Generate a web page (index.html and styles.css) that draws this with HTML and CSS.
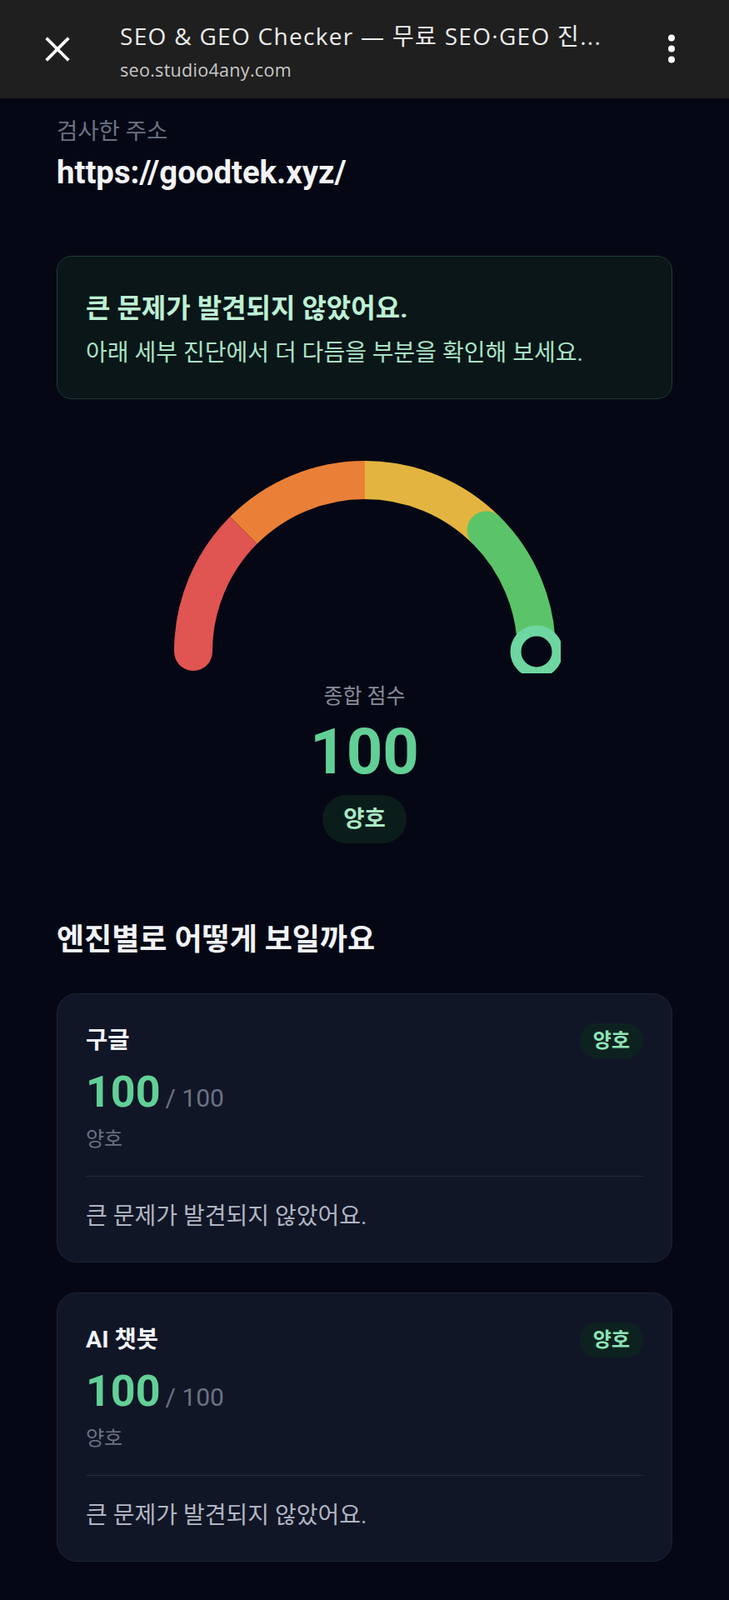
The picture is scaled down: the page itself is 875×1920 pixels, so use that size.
FILE: index.html
```html
<!DOCTYPE html>
<html lang="ko">
<head>
<meta charset="utf-8">
<title>SEO &amp; GEO Checker</title>
<link rel="stylesheet" href="styles.css">
</head>
<body>
<header class="topbar">
  <div class="close-btn">
    <svg width="30" height="30" viewBox="0 0 30 30"><path d="M3 3 L27 27 M27 3 L3 27" stroke="#ffffff" stroke-width="3.8" stroke-linecap="square" fill="none"/></svg>
  </div>
  <div class="tab-info">
    <div class="tab-title">SEO &amp; GEO Checker — 무료 SEO·GEO 진...</div>
    <div class="tab-url">seo.studio4any.com</div>
  </div>
  <div class="menu-btn">
    <svg width="10" height="36" viewBox="0 0 10 36"><circle cx="5" cy="4.5" r="4" fill="#ffffff"/><circle cx="5" cy="17.5" r="4" fill="#ffffff"/><circle cx="5" cy="30.5" r="4" fill="#ffffff"/></svg>
  </div>
</header>

<main class="main">
  <div class="label">검사한 주소</div>
  <div class="url">https://goodtek.xyz/</div>

  <section class="alert">
    <div class="alert-title">큰 문제가 발견되지 않았어요.</div>
    <div class="alert-text">아래 세부 진단에서 더 다듬을 부분을 확인해 보세요.</div>
  </section>

  <section class="gauge">
    <svg class="gauge-svg" width="470" height="260" viewBox="0 0 470 260">
      <circle cx="29" cy="234" r="23" fill="#e05452"/>
      <path d="M29 234 A206 206 0 0 1 89.34 88.34" stroke="#e05452" stroke-width="46" fill="none"/>
      <path d="M89.34 88.34 A206 206 0 0 1 235 28" stroke="#ea8038" stroke-width="46" fill="none"/>
      <path d="M235 28 A206 206 0 0 1 380.66 88.34" stroke="#e4b440" stroke-width="46" fill="none"/>
      <path d="M380.66 88.34 A206 206 0 0 1 441 234" stroke="#5cc468" stroke-width="46" stroke-linecap="round" fill="none"/>
      <circle cx="441" cy="234" r="25" fill="#050814" stroke="#6dd6a1" stroke-width="13"/>
    </svg>
    <div class="gauge-label">종합 점수</div>
    <div class="gauge-score">100</div>
    <div class="badge">양호</div>
  </section>

  <h2 class="section-title">엔진별로 어떻게 보일까요</h2>

  <div class="cards">
    <article class="card">
      <div class="card-head">
        <div class="card-name">구글</div>
        <div class="pill">양호</div>
      </div>
      <div class="score-row">
        <span class="score">100</span>
        <span class="score-max">/ 100</span>
      </div>
      <div class="state">양호</div>
      <div class="divider"></div>
      <div class="desc">큰 문제가 발견되지 않았어요.</div>
    </article>

    <article class="card">
      <div class="card-head">
        <div class="card-name">AI 챗봇</div>
        <div class="pill">양호</div>
      </div>
      <div class="score-row">
        <span class="score">100</span>
        <span class="score-max">/ 100</span>
      </div>
      <div class="state">양호</div>
      <div class="divider"></div>
      <div class="desc">큰 문제가 발견되지 않았어요.</div>
    </article>
  </div>
</main>
</body>
</html>
```

FILE: styles.css
```css
* { box-sizing: border-box; }
html, body { margin: 0; padding: 0; }
body {
  background: #050814;
  font-family: Roboto, "Noto Sans CJK KR", sans-serif;
  width: 875px;
  min-height: 1920px;
  overflow: hidden;
}

.topbar {
  height: 118px;
  background: #1f1f1f;
  display: flex;
  align-items: center;
}
.close-btn {
  width: 30px;
  height: 30px;
  margin-left: 54px;
  display: flex;
}
.tab-info {
  margin-left: 60px;
  flex: 1;
  min-width: 0;
  padding-top: 5px;
  font-family: "Open Sans", "Noto Sans CJK KR", sans-serif;
}
.tab-title {
  font-size: 28px;
  line-height: 34px;
  letter-spacing: 1.3px;
  color: #ececec;
  white-space: nowrap;
}
.tab-url {
  margin-top: 10px;
  font-size: 21.5px;
  line-height: 28px;
  letter-spacing: 0.3px;
  color: #c8c8c8;
}
.menu-btn {
  width: 10px;
  height: 36px;
  margin-right: 64px;
  display: flex;
}

.main {
  padding: 24px 68px 0;
}
.label {
  font-size: 27.5px;
  line-height: 32px;
  color: #6b7282;
}
.url {
  font-size: 38.3px;
  line-height: 46px;
  font-weight: 700;
  color: #f3f4f6;
  margin-top: 10px;
}

.alert {
  margin-top: 77px;
  border: 1px solid #1f3d33;
  background: #0a1618;
  border-radius: 18px;
  padding: 42px 34px 34px;
}
.alert-title {
  font-size: 32px;
  line-height: 40px;
  font-weight: 700;
  color: #bdf0d4;
}
.alert-text {
  font-size: 28px;
  line-height: 40px;
  color: #a9e3c6;
  margin-top: 14px;
}

.gauge {
  margin-top: 69px;
  display: flex;
  flex-direction: column;
  align-items: center;
}
.gauge-svg { display: block; }
.gauge-label {
  margin-top: 13px;
  font-size: 25px;
  line-height: 30px;
  color: #868b99;
}
.gauge-score {
  margin-top: 9px;
  font-size: 76px;
  line-height: 84px;
  font-weight: 700;
  color: #62d096;
}
.badge {
  margin-top: 10px;
  height: 58px;
  padding: 0 25px;
  border-radius: 29px;
  background: #0b1d1b;
  color: #a6e8c3;
  font-size: 27.5px;
  line-height: 58px;
  font-weight: 700;
}

.section-title {
  margin: 94px 0 0;
  font-size: 36px;
  line-height: 44px;
  font-weight: 700;
  color: #f2f3f7;
}

.cards {
  margin-top: 42px;
  display: flex;
  flex-direction: column;
  gap: 36px;
}
.card {
  background: #111626;
  border: 1px solid #1e2436;
  border-radius: 24px;
  padding: 35px 34px 36px;
}
.card-head {
  display: flex;
  justify-content: space-between;
  align-items: center;
  height: 41px;
}
.card-name {
  font-size: 28.5px;
  line-height: 41px;
  font-weight: 700;
  color: #f1f3f7;
}
.pill {
  height: 42px;
  padding: 0 16px;
  border-radius: 21px;
  background: #0d2220;
  color: #8fe3b5;
  font-size: 24px;
  line-height: 42px;
  font-weight: 700;
}
.score-row {
  margin-top: 11px;
  display: flex;
  align-items: baseline;
  gap: 6px;
  height: 62px;
}
.score {
  font-size: 52px;
  line-height: 62px;
  font-weight: 700;
  color: #62d096;
}
.score-max {
  font-size: 30px;
  line-height: 62px;
  color: #6b7282;
}
.state {
  margin-top: 10px;
  font-size: 24px;
  line-height: 30px;
  color: #6b7282;
}
.divider {
  margin-top: 29px;
  height: 1px;
  background: #232a3b;
}
.desc {
  margin-top: 30px;
  font-size: 28px;
  line-height: 36px;
  color: #b0b5c2;
}
```
